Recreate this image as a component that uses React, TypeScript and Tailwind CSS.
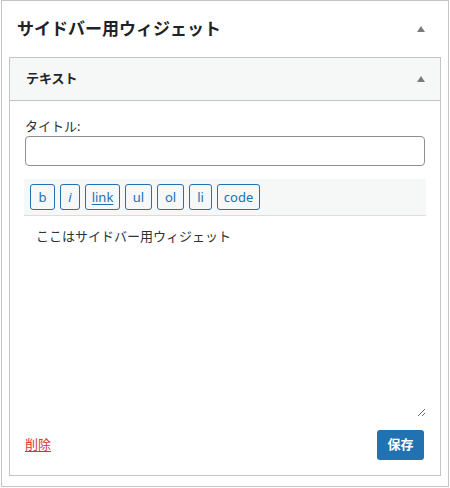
const tags = [
  { label: "b", w: "w-[25px]" },
  { label: "i", w: "w-[20px]", italic: true },
  { label: "link", w: "w-[35px]", underline: true },
  { label: "ul", w: "w-[27px]" },
  { label: "ol", w: "w-[27px]" },
  { label: "li", w: "w-[23px]" },
  { label: "code", w: "w-[43px]" },
];

const Caret = () => (
  <svg width="8" height="6" viewBox="0 0 8 6" className="shrink-0">
    <polygon points="4,0 8,6 0,6" fill="#787c82" />
  </svg>
);

const App = () => {
  return (
    <div className="ml-px w-[448px] border border-[#c3c4c7] bg-white pb-[10px] font-['Noto_Sans','Noto_Sans_CJK_JP',sans-serif] text-[#2c3338]">
      {/* Sidebar header */}
      <div className="flex h-[56px] items-center justify-between pl-[15px] pr-[23px]">
        <h2 className="text-[17px] font-bold text-[#1d2327]">サイドバー用ウィジェット</h2>
        <Caret />
      </div>

      {/* Text widget */}
      <div className="mx-[7px] border border-[#c3c4c7] bg-white">
        <div className="flex h-[43px] items-center justify-between border-b border-[#c3c4c7] bg-[#f6f7f7] pl-[16px] pr-[15px]">
          <h3 className="text-[13px] font-semibold text-[#1d2327]">テキスト</h3>
          <Caret />
        </div>

        <div className="px-[15px] pb-[15px] pt-4">
          <label className="block text-[13px] leading-[19px]">タイトル:</label>
          <input
            type="text"
            className="block h-[30px] w-full rounded-[4px] border border-[#8c8f94] px-2 text-[14px] outline-none"
          />

          <div className="-mx-px mt-[13px]">
            <div className="flex gap-[5px] border-b border-[#dcdcde] bg-[#f6f7f7] px-[6px] py-[5px]">
              {tags.map((t) => (
                <button
                  key={t.label}
                  className={`${t.w} h-[26px] rounded-[3px] border border-[#2271b1] bg-[#f6f7f7] text-[13px] leading-none text-[#2271b1] ${
                    t.italic ? "italic" : ""
                  } ${t.underline ? "underline underline-offset-2" : ""}`}
                >
                  {t.label}
                </button>
              ))}
            </div>
            <textarea
              defaultValue="ここはサイドバー用ウィジェット"
              className="block h-[201px] w-full resize-y border-0 bg-white pl-[12px] pt-[10px] text-[13px] leading-[20px] text-[#2c3338] outline-none"
            />
          </div>

          <div className="mt-[13px] flex items-center justify-between">
            <a href="#" className="text-[13px] text-[#d63638] underline underline-offset-2">
              削除
            </a>
            <button className="mr-px h-[30px] w-[47px] rounded-[3px] bg-[#2271b1] text-[13px] font-bold text-white">
              保存
            </button>
          </div>
        </div>
      </div>
    </div>
  );
};

export default App;
